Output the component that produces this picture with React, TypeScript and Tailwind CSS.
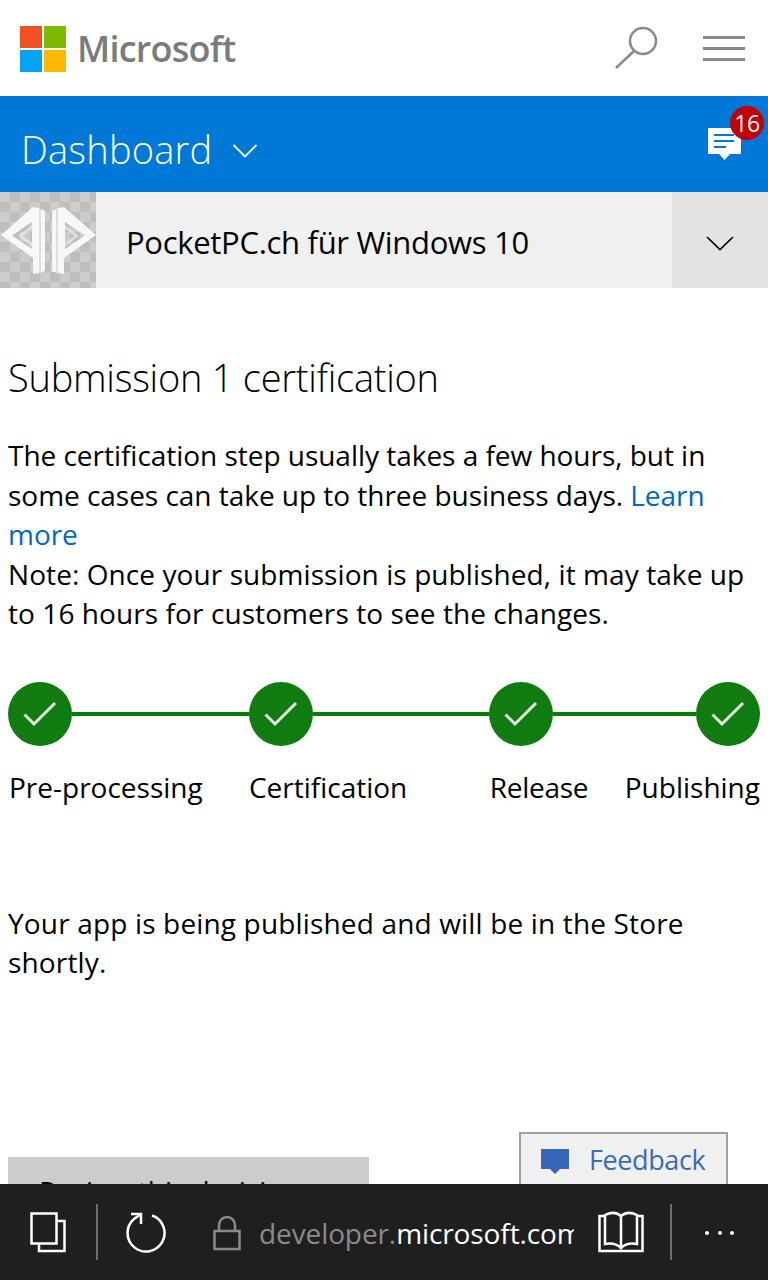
import React from "react";

const Check = () => (
  <div className="w-16 h-16 rounded-full bg-[#107c10] flex items-center justify-center shrink-0">
    <svg width="36" height="30" viewBox="0 0 36 30" fill="none" stroke="#e8f3e8" strokeWidth="3">
      <path d="M2.5 15.5 L12 25 L33 4" />
    </svg>
  </div>
);

const Line = () => <div className="flex-1 h-1 bg-[#008000]" />;

const Half = () => (
  <>
    <path fillRule="evenodd" d="M33 15 L39.5 16.5 L39.5 81 L33 82 L33 66 L1 43 Z M32 30 L12 43.5 L32 57 Z" />
    <path d="M40.5 17 L45 19 L45 79 L40.5 81 Z" />
    <path d="M18 44 L32 33 L32 37 L23 44 L32 51 L32 55 Z" opacity="0.5" />
  </>
);

const Tile = () => (
  <div className="w-24 h-24 shrink-0 bg-[repeating-conic-gradient(#bebebe_0_25%,#cccccc_0_50%)] bg-[length:20px_20px]">
    <svg width="96" height="96" viewBox="0 0 96 96" fill="#f7f7f7">
      <g>
        <Half />
      </g>
      <g transform="translate(97 0) scale(-1 1)">
        <Half />
      </g>
    </svg>
  </div>
);

export default function App() {
  return (
    <div className="relative w-[768px] h-[1280px] overflow-hidden bg-white text-black font-['Open_Sans',sans-serif]">
      {/* Top header */}
      <header className="h-24 flex items-center pl-5 pr-[23px]">
        <svg width="47" height="46" viewBox="0 0 47 46" className="shrink-0 mt-[2px]">
          <rect x="0" y="0" width="22" height="22" fill="#f25022" />
          <rect x="24" y="0" width="22" height="22" fill="#7fba00" />
          <rect x="0" y="24" width="22" height="22" fill="#00a4ef" />
          <rect x="24" y="24" width="22" height="22" fill="#ffb900" />
        </svg>
        <span className="ml-[10px] mt-[2px] text-[36px] font-semibold tracking-[-0.75px] text-[#7b7b7b] leading-none">Microsoft</span>
        <svg width="44" height="44" viewBox="0 0 44 44" fill="none" className="ml-auto mr-[45px]" stroke="#8a8a8a" strokeWidth="2.5">
          <circle cx="29" cy="15" r="13" />
          <path d="M20 25 L2 42" />
        </svg>
        <div className="w-[42px] flex flex-col gap-2">
          <div className="h-[3px] bg-[#8a8a8a]" />
          <div className="h-[3px] bg-[#8a8a8a]" />
          <div className="h-[3px] bg-[#8a8a8a]" />
        </div>
      </header>

      {/* Dashboard bar */}
      <div className="relative h-24 bg-[#0078d7] flex items-center pl-[21px] text-white">
        <span className="mt-[10px] text-[38px] font-light leading-none tracking-[0.2px]">Dashboard</span>
        <svg width="26" height="14" viewBox="0 0 26 14" fill="none" stroke="white" strokeWidth="1.8" className="ml-[20px] mt-[14px]">
          <path d="M1.5 1 L13 12.5 L24.5 1" />
        </svg>
        <div className="ml-auto mr-[27px] mt-[1px]">
          <svg width="33" height="33" viewBox="0 0 33 33">
            <path d="M0 0 H33 V26 H22 L16.5 32 L11 26 H0 Z" fill="white" />
            <path d="M6 7 H26 M6 13 H26 M6 19 H18" stroke="#0078d7" strokeWidth="2" />
          </svg>
        </div>
        <div className="absolute left-[730px] top-[10px] w-[34px] h-[34px] rounded-full bg-[#c20000] flex items-center justify-center text-[23px] leading-none tracking-[-0.5px] text-white">
          16
        </div>
      </div>

      {/* App selector */}
      <div className="h-24 flex bg-[#f0f0f0]">
        <Tile />
        <div className="flex-1 flex items-center pl-[30px] pt-1 text-[31px] tracking-[-0.3px]">PocketPC.ch für Windows 10</div>
        <div className="w-24 bg-[#e3e3e3] flex items-center justify-center pt-[6px]">
          <svg width="28" height="15" viewBox="0 0 28 15" fill="none" stroke="black" strokeWidth="1.7">
            <path d="M1 1 L14 13.5 L27 1" />
          </svg>
        </div>
      </div>

      {/* Content */}
      <main className="px-2 pt-[63px]">
        <h1 className="text-[38px] font-light leading-[52px] tracking-[-0.25px]">Submission 1 certification</h1>
        <div className="mt-[33px] text-[28px] leading-[39.5px]">
          <p className="tracking-[-0.03px]">
            The certification step usually takes a few hours, but in some cases can take up to three business days.{" "}
            <span className="text-[#0067c5]">Learn more</span>
          </p>
          <p className="tracking-[0.08px]">Note: Once your submission is published, it may take up to 16 hours for customers to see the changes.</p>
        </div>

        <div className="mt-[48px] flex items-center">
          <Check />
          <Line />
          <Check />
          <Line />
          <Check />
          <div className="w-[143px] h-1 bg-[#008000]" />
          <Check />
        </div>
        <div className="mt-[21px] pl-[1px] flex text-[28px] leading-[40px] whitespace-nowrap">
          <span className="w-[240px]">Pre-processing</span>
          <span className="w-[241px]">Certification</span>
          <span className="w-[135px] tracking-[-0.3px]">Release</span>
          <span>Publishing</span>
        </div>

        <p className="mt-[97px] text-[28px] leading-[39.5px] tracking-[0.16px]">
          Your app is being published and will be in the Store shortly.
        </p>

        <div className="mt-[174px] w-[361px] h-[80px] bg-[#cccccc] pl-[31px] pt-[15px] text-[28px] leading-[39.5px]">
          Review this decision
        </div>
      </main>

      {/* Feedback tab */}
      <div className="absolute left-[519px] top-[1132px] w-[209px] h-[70px] border-2 border-[#a0a0a0] bg-[#f0f0f0] flex items-start pl-5 pt-2">
        <svg width="29" height="25" viewBox="0 0 29 25" className="mt-[7px] shrink-0">
          <path d="M0 0 H28 V20 H19 L14 25 L9 20 H0 Z" fill="#3666bb" />
        </svg>
        <span className="ml-[19px] text-[27px] leading-[36px] tracking-[-0.4px] text-[#3a6bbd]">Feedback</span>
      </div>

      {/* Browser bar */}
      <footer className="absolute left-0 bottom-0 w-full h-24 bg-[#1f1f1f] flex items-center text-[28px]">
        <svg width="36" height="41" viewBox="0 0 36 41" fill="none" stroke="white" strokeWidth="2.5" className="ml-[30px] shrink-0 mt-[1px]">
          <rect x="1.5" y="1.5" width="25" height="30" />
          <path d="M27 9 H34.5 V39 H9 V32" />
        </svg>
        <div className="ml-[30px] w-[2px] h-14 bg-[#6e6e6e] shrink-0" />
        <svg width="42" height="42" viewBox="0 0 42 42" fill="none" stroke="white" strokeWidth="2.5" className="ml-[27px] shrink-0 mt-[1px]">
          <path d="M27 3.5 A18.5 18.5 0 1 1 9 7 L15.5 2.5" />
          <path d="M6 2 H16 V12" />
        </svg>
        <svg width="28" height="36" viewBox="0 0 28 36" fill="none" stroke="#8a8a8a" strokeWidth="2.5" className="ml-[46px] shrink-0 mt-[2px]">
          <rect x="1.5" y="16" width="25" height="18" />
          <path d="M6 16 V10 A8 8 0 0 1 22 10 V16" />
        </svg>
        <div className="ml-[18px] mt-[2px] w-[315px] overflow-hidden whitespace-nowrap shrink-0 tracking-[-0.1px]">
          <span className="text-[#8a8a8a]">developer.</span>
          <span className="text-white">microsoft.com/en-us</span>
        </div>
        <svg width="46" height="42" viewBox="0 0 46 42" fill="none" stroke="white" strokeWidth="2.5" className="ml-6 shrink-0">
          <path d="M7 4 V33 C13 32 19 33 23 37 C27 33 33 32 39 33 V4 C33 1 27 1.5 23 5 C19 1.5 13 1 7 4 Z" />
          <path d="M23 5 V37" />
          <path d="M7 5 H1.5 V40 H44.5 V5 H39" />
        </svg>
        <div className="ml-[26px] w-[2px] h-14 bg-[#6e6e6e] shrink-0" />
        <div className="ml-[33px] mt-[2px] flex gap-[8.5px]">
          <div className="w-1 h-1 rounded-full bg-white" />
          <div className="w-1 h-1 rounded-full bg-white" />
          <div className="w-1 h-1 rounded-full bg-white" />
        </div>
      </footer>
    </div>
  );
}
